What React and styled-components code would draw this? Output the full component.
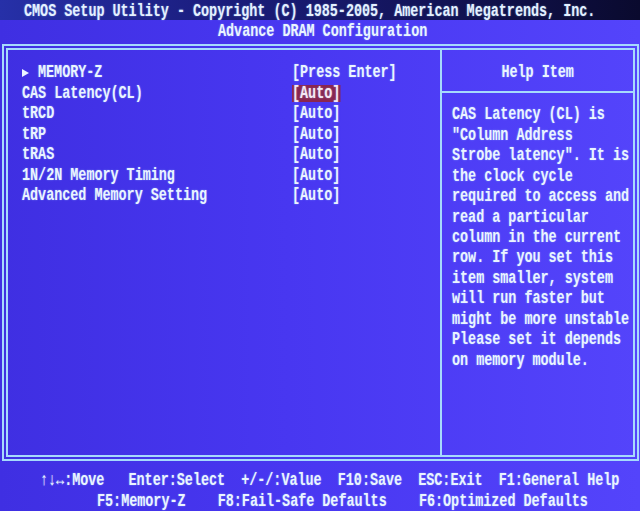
import React from 'react';
import styled, { createGlobalStyle } from 'styled-components';

const ROW = 20.44;

const GlobalStyle = createGlobalStyle`
	html, body {
		margin: 0;
		padding: 0;
		background: #4535ec;
	}
	#root {
		width: 640px;
		height: 511px;
	}
`;

const Screen = styled.div`
	width: 640px;
	height: 511px;
	overflow: hidden;
	display: flex;
	flex-direction: column;
	background: linear-gradient(90deg, #3f2fe2 0%, #4837f1 45%, #5444fb 100%);
	font-family: "Liberation Mono", "DejaVu Sans Mono", monospace;
	font-weight: bold;
	font-size: 18px;
	color: #eaf4ff;
`;

// BIOS glyphs sit in tall 8px cells: squeeze a mono font sideways
const Text = styled.span`
	display: inline-block;
	white-space: pre;
	line-height: ${(p) => p.$lh || ROW}px;
	transform: scaleX(0.745);
	transform-origin: ${(p) => (p.$center ? 'center' : 'left')} center;
	text-shadow: 0 0 2px rgba(170, 220, 255, 0.55);
`;

const TitleBar = styled.div`
	height: ${ROW}px;
	box-sizing: border-box;
	padding: 1px 0 0 24px;
	background: linear-gradient(90deg, #2630a8 0%, #1c1f82 30%, #13145a 65%, #0a0a2e 100%);
	color: #e4f0ff;
`;

const SubTitle = styled.div`
	height: ${ROW}px;
	box-sizing: border-box;
	padding: 1px 0 0 218px;
`;

const Frame = styled.div`
	margin: 3px 1px 0 2px;
	height: 419px;
	box-sizing: border-box;
	border: 2px solid #a6dafc;
	padding: 2px;
	display: flex;
`;

const Inner = styled.div`
	flex: 1;
	min-width: 0;
	border: 2px solid #a6dafc;
	display: flex;
`;

const LeftPanel = styled.div`
	width: 432px;
	flex-shrink: 0;
	padding: 12.6px 0 0 14px;
	box-sizing: border-box;
`;

const Row = styled.div`
	display: flex;
	align-items: center;
	height: ${ROW}px;
`;

const Name = styled.div`
	width: 270px;
	display: flex;
	align-items: center;
`;

const Arrow = styled.span`
	width: 0;
	height: 0;
	border-left: 7px solid #eaf4ff;
	border-top: 4.5px solid transparent;
	border-bottom: 4.5px solid transparent;
	margin-right: 9px;
`;

const Value = styled(Text)`
	background: ${(p) => (p.$active ? '#8a2650' : 'transparent')};
	color: ${(p) => (p.$active ? '#f6e8f4' : 'inherit')};
`;

const RightPanel = styled.div`
	flex: 1;
	min-width: 0;
	border-left: 2px solid #a6dafc;
	display: flex;
	flex-direction: column;
`;

const HelpHead = styled.div`
	height: 43px;
	box-sizing: border-box;
	padding-top: 12.6px;
	border-bottom: 2px solid #a6dafc;
	display: flex;
	justify-content: center;
	align-items: flex-start;
`;

const HelpBody = styled.div`
	padding: 11.5px 0 0 10px;
	display: flex;
	flex-direction: column;
`;

const Footer = styled.div`
	padding-top: 9.2px;
	display: flex;
	flex-direction: column;
`;

const FooterLine = styled.div`
	height: ${ROW}px;
	padding-left: ${(p) => p.$indent}px;
`;

const items = [
	{ name: 'MEMORY-Z', value: '[Press Enter]', sub: true },
	{ name: 'CAS Latency(CL)', value: '[Auto]', active: true },
	{ name: 'tRCD', value: '[Auto]' },
	{ name: 'tRP', value: '[Auto]' },
	{ name: 'tRAS', value: '[Auto]' },
	{ name: '1N/2N Memory Timing', value: '[Auto]' },
	{ name: 'Advanced Memory Setting', value: '[Auto]' },
];

const help = [
	'CAS Latency (CL) is',
	'"Column Address',
	'Strobe latency". It is',
	'the clock cycle',
	'required to access and',
	'read a particular',
	'column in the current',
	'row. If you set this',
	'item smaller, system',
	'will run faster but',
	'might be more unstable',
	'Please set it depends',
	'on memory module.',
];

export default function App() {
	return (
		<Screen>
			<GlobalStyle />
			<TitleBar>
				<Text>CMOS Setup Utility - Copyright (C) 1985-2005, American Megatrends, Inc.</Text>
			</TitleBar>
			<SubTitle>
				<Text>Advance DRAM Configuration</Text>
			</SubTitle>
			<Frame>
				<Inner>
					<LeftPanel>
						{items.map((item) => (
							<Row key={item.name}>
								<Name>
									{item.sub && <Arrow />}
									<Text>{item.name}</Text>
								</Name>
								<Value $active={item.active} $lh={item.active ? 17 : ROW}>
									{item.value}
								</Value>
							</Row>
						))}
					</LeftPanel>
					<RightPanel>
						<HelpHead>
							<Text $center>Help Item</Text>
						</HelpHead>
						<HelpBody>
							{help.map((line) => (
								<Row key={line}>
									<Text>{line}</Text>
								</Row>
							))}
						</HelpBody>
					</RightPanel>
				</Inner>
			</Frame>
			<Footer>
				<FooterLine $indent={40}>
					<Text>{'↑↓↔:Move   Enter:Select  +/-/:Value  F10:Save  ESC:Exit  F1:General Help'}</Text>
				</FooterLine>
				<FooterLine $indent={97}>
					<Text>{'F5:Memory-Z    F8:Fail-Safe Defaults    F6:Optimized Defaults'}</Text>
				</FooterLine>
			</Footer>
		</Screen>
	);
}
